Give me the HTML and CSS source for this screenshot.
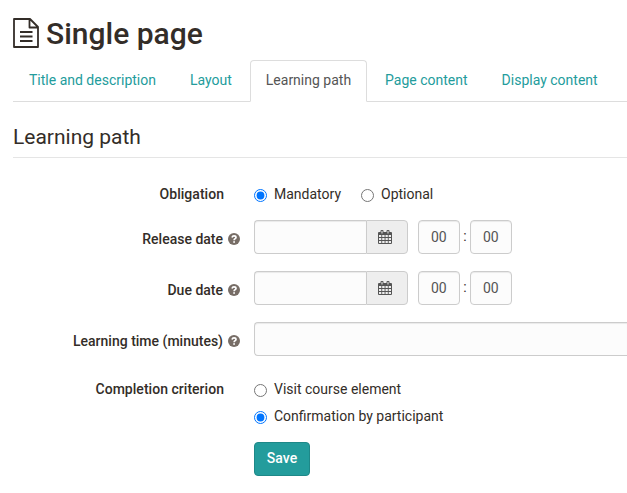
FILE: index.html
```html
<!DOCTYPE html>
<html lang="en">
<head>
<meta charset="utf-8">
<title>Single page</title>
<link rel="stylesheet" href="styles.css">
</head>
<body>
<svg class="defs" aria-hidden="true">
  <symbol id="calendar" viewBox="0 0 14 15"><path fill="currentColor" fill-rule="evenodd" d="M1 2h1.5V1a1 1 0 0 1 1-1h1a1 1 0 0 1 1 1v1h3V1a1 1 0 0 1 1-1h1a1 1 0 0 1 1 1v1H13a1 1 0 0 1 1 1v10a1 1 0 0 1-1 1H1a1 1 0 0 1-1-1V3a1 1 0 0 1 1-1zM3.5 1v2.5h1V1zm6 0v2.5h1V1zM1 5v2h2.3V5zm3.2 0v2h2.4V5zm3.3 0v2h2.3V5zm3.2 0v2H13V5zM1 8v2h2.3V8zm3.2 0v2h2.4V8zm3.3 0v2h2.3V8zm3.2 0v2H13V8zM1 11v2h2.3v-2zm3.2 0v2h2.4v-2zm3.3 0v2h2.3v-2zm3.2 0v2H13v-2z"/></symbol>
  <symbol id="help" viewBox="0 0 12 12"><circle cx="6" cy="6" r="6" fill="#776d66"/><path d="M4 4.5C4.4 3.2 5.1 2.8 6 2.8c1.2 0 2 .7 2 1.6C8 5.7 6.1 5.6 6.1 7.3" fill="none" stroke="#fff" stroke-width="1.7"/><path d="M5.2 8.2H7v1.6H5.2z" fill="#fff"/></symbol>
</svg>
<main>
  <h1><svg class="page-icon" viewBox="0 0 26 30"><path d="M1 1h16l8 8v20H1zM16.5 1v8.5H25M7 14h12.5M7 18.5h12.5M7 23h12.5" fill="none" stroke="currentColor" stroke-width="1.8" stroke-linejoin="round"/></svg><span>Single page</span></h1>
  <nav class="tabs">
    <a>Title and description</a><a>Layout</a><a class="active">Learning path</a><a>Page content</a><a>Display content</a>
  </nav>
  <h2>Learning path</h2>
  <form>
    <div class="row options">
      <div class="label">Obligation</div>
      <div class="radios"><label><input type="radio" name="obligation" checked>Mandatory</label><label><input type="radio" name="obligation">Optional</label></div>
    </div>
    <div class="row">
      <div class="label">Release date<svg class="help"><use href="#help"/></svg></div>
      <div class="date"><input class="control day" type="text"><span class="addon"><svg><use href="#calendar"/></svg></span><input class="control time" type="text" value="00"><span class="colon">:</span><input class="control time" type="text" value="00"></div>
    </div>
    <div class="row">
      <div class="label">Due date<svg class="help"><use href="#help"/></svg></div>
      <div class="date"><input class="control day" type="text"><span class="addon"><svg><use href="#calendar"/></svg></span><input class="control time" type="text" value="00"><span class="colon">:</span><input class="control time" type="text" value="00"></div>
    </div>
    <div class="row">
      <div class="label">Learning time (minutes)<svg class="help"><use href="#help"/></svg></div>
      <input class="control wide" type="text">
    </div>
    <div class="row criterion">
      <div class="label">Completion criterion</div>
      <div class="radios stacked"><label><input type="radio" name="criterion">Visit course element</label><label><input type="radio" name="criterion" checked>Confirmation by participant</label></div>
    </div>
    <button type="button">Save</button>
  </form>
</main>
</body>
</html>
```
FILE: styles.css
```css
* { box-sizing: border-box; }
body { margin: 0; background: #fff; color: #332d28; font: 14px/20px Roboto, sans-serif; }
.defs { display: none; }
main { padding: 17px 0 0 13px; }
h1 { display: flex; align-items: flex-start; height: 33px; margin: 0; font-size: 30px; line-height: 33px; font-weight: 500; }
.page-icon { width: 26px; height: 30px; margin: 1px 7px 0 0; }
.tabs { display: flex; height: 42px; margin-top: 10px; border-bottom: 1px solid #ddd; }
.tabs a { height: 42px; padding: 9px 15px; margin-right: 2px; border: 1px solid transparent; border-radius: 4px 4px 0 0; color: #239c9c; white-space: nowrap; }
.tabs .active { border-color: #ddd #ddd #fff; background: #fff; color: #555; }
h2 { height: 36px; margin: 20px 0 0; padding-top: 3px; border-bottom: 1px solid #e5e5e5; font-size: 21px; line-height: 24px; font-weight: 400; }
form { padding-top: 19px; }
.row { display: grid; grid-template-columns: 227px 1fr; column-gap: 14px; height: 34px; margin-bottom: 17px; }
.options { margin-bottom: 9px; }
.label { padding: 9px 0 0; display: flex; justify-content: flex-end; height: 29px; font-weight: 500; white-space: nowrap; }
.options .label, .criterion .label { padding-right: 16px; padding-top: 7px; letter-spacing: .03px; }
.help { width: 12px; height: 12px; margin: 4px 0 0 5px; }
.radios { display: flex; padding-top: 7px; gap: 20px; }
.radios label { display: flex; height: 20px; white-space: nowrap; }
.radios input { width: 13px; height: 13px; margin: 5px 7px 0 0; accent-color: #0075ff; }
.stacked { flex-direction: column; gap: 7px; }
.date { display: flex; }
.control { height: 34px; border: 1px solid #ccc; border-radius: 4px; background: #fcfcfc; box-shadow: inset 0 1px 1px rgba(0,0,0,.075); color: #555; padding: 6px 12px; font: 14px/20px Roboto, sans-serif; }
.day { width: 112px; border-right: 0; border-radius: 4px 0 0 4px; }
.addon { display: flex; width: 42px; height: 34px; align-items: center; justify-content: center; border: 1px solid #ccc; border-radius: 0 4px 4px 0; background: #eee; color: #555; margin-right: 10px; }
.addon svg { width: 14px; height: 15px; margin-right: 4px; }
.time { width: 42px; }
.colon { width: 10px; padding-top: 6px; text-align: center; }
.wide { width: 100%; border-right: 0; border-radius: 4px 0 0 4px; }
.criterion { height: 60px; margin: -1px 0 10px; }
button { display: block; width: 56px; height: 34px; margin-left: 241px; padding: 0 0 2px; border: 1px solid #1e8888; border-radius: 4px; background: #239c9c; color: #fff; font: 500 14px/20px Roboto, sans-serif; }
```
